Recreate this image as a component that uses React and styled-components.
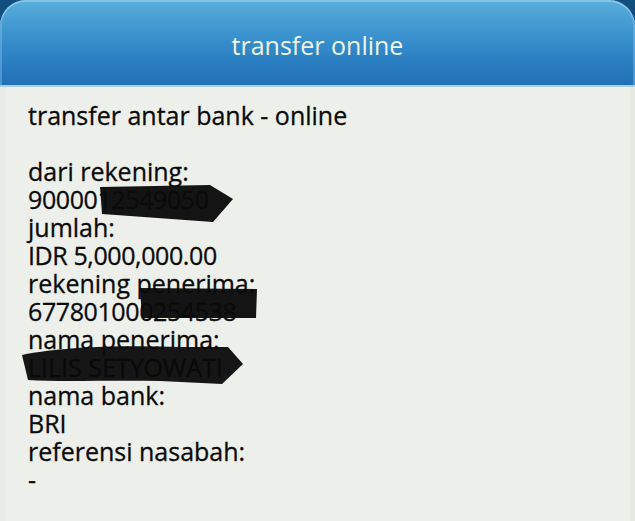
import React from "react";
import styled, { createGlobalStyle } from "styled-components";

const Global = createGlobalStyle`
  html, body { margin: 0; padding: 0; background: #edf0ea; }
  body { font-family: "Open Sans", "Noto Sans", sans-serif; }
`;

const Frame = styled.div`
  position: relative;
  width: 635px;
  height: 521px;
  overflow: hidden;
  background: #124f80;
  display: flex;
  flex-direction: column;
`;

const Header = styled.header`
  height: 85px;
  flex: none;
  border-radius: 26px 26px 0 0;
  background: linear-gradient(180deg, #5aaedb 0%, #3f97d0 35%, #2b80c3 70%, #2170b6 100%);
  box-shadow: inset 0 2px 0 rgba(160, 210, 240, 0.6), inset 2px 0 0 rgba(140, 200, 235, 0.4), inset -2px 0 0 rgba(140, 200, 235, 0.4);
  display: flex;
  align-items: center;
  justify-content: center;
  border-bottom: 2px solid #a6cfe6;
`;

const Title = styled.h1`
  margin: 4px 0 0;
  font-size: 25px;
  font-weight: 400;
  color: #eef6ec;
`;

const Panel = styled.main`
  flex: 1;
  background: #edf0ea;
  padding: 14px 28px 0;
  box-shadow: inset -5px 0 0 #e6e9e2, inset 5px 0 0 #e9ece6;
`;

const Line = styled.div`
  font-size: 25px;
  line-height: 28px;
  height: 28px;
  color: #0a0a0a;
  -webkit-text-stroke: 0.3px #0a0a0a;
  white-space: nowrap;
  letter-spacing: ${(p) => (p.$tight ? "-0.4px" : "0")};
`;

const Redactions = styled.svg`
  position: absolute;
  left: 0;
  top: 0;
  pointer-events: none;
`;

const lines = [
  { t: "transfer antar bank - online" },
  { t: "\u00a0" },
  { t: "dari rekening:" },
  { t: "9000012549050", tight: true },
  { t: "jumlah:" },
  { t: "IDR 5,000,000.00", tight: true },
  { t: "rekening penerima:" },
  { t: "677801000254538", tight: true },
  { t: "nama penerima:" },
  { t: "LILIS SETYOWATI" },
  { t: "nama bank:" },
  { t: "BRI" },
  { t: "referensi nasabah:" },
  { t: "-" },
];

export default function App() {
  return (
    <>
      <Global />
      <Frame>
        <Header>
          <Title>transfer online</Title>
        </Header>
        <Panel>
          {lines.map((l, i) => (
            <Line key={i} $tight={l.tight}>{l.t}</Line>
          ))}
        </Panel>
        <Redactions width="635" height="521" viewBox="0 0 635 521">
          <polygon points="100,187 210,185 233,199 213,222 102,214" fill="#0a0a0a" fillOpacity="0.96" />
          <polygon points="140,288 257,289 256,318 142,318" fill="#0a0a0a" fillOpacity="0.96" />
          <path d="M22,355 C60,347 120,345 180,347 L228,347 L243,364 L222,384 L160,381 C110,380 60,382 28,380 Z" fill="#0a0a0a" fillOpacity="0.95" />
        </Redactions>
      </Frame>
    </>
  );
}
